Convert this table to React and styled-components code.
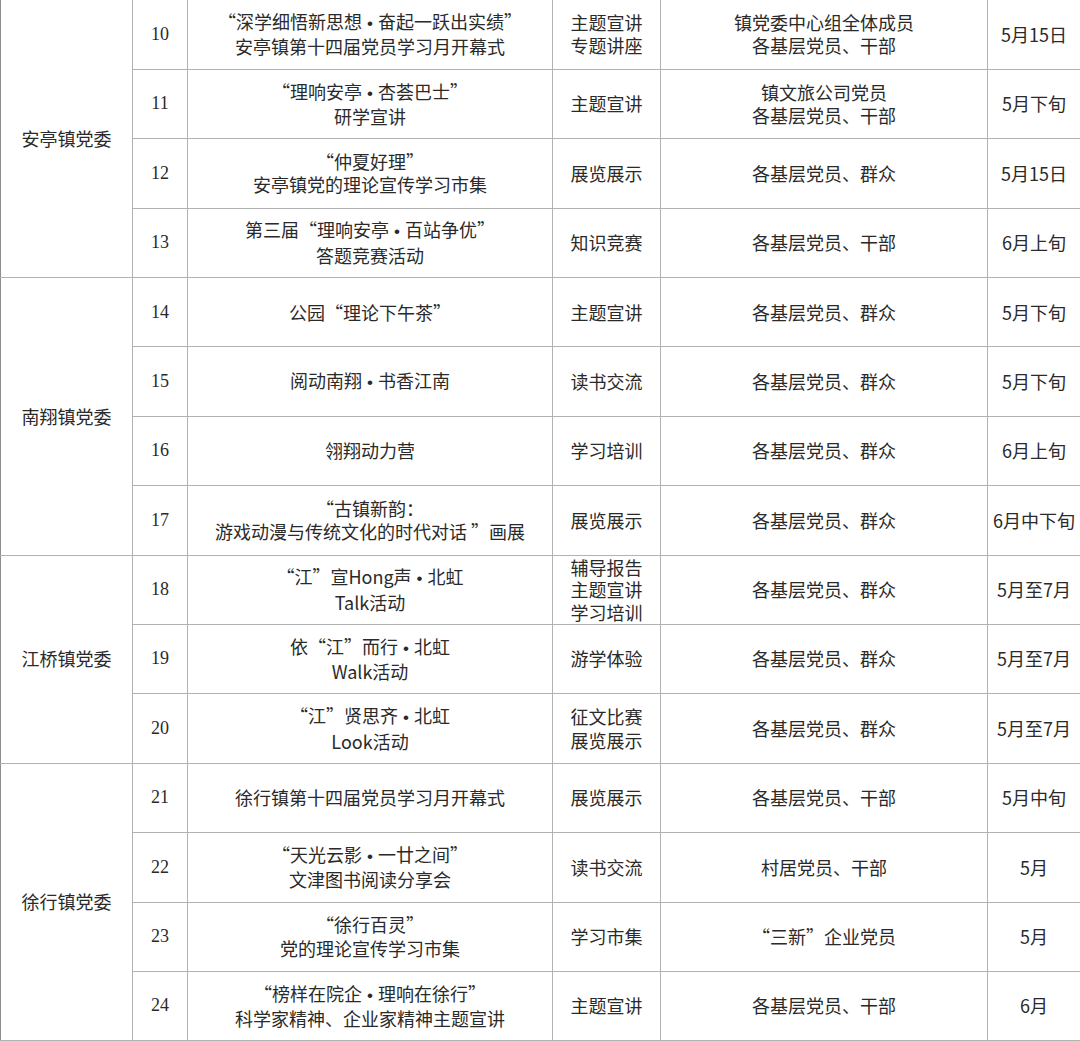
import React from 'react';
import styled, { createGlobalStyle } from 'styled-components';

const GlobalStyle = createGlobalStyle`
  html, body {
    margin: 0;
    padding: 0;
    background: #ffffff;
    overflow: hidden;
  }
`;

const cjk = '"Noto Sans CJK SC", "Noto Sans", sans-serif';

const Sheet = styled.div`
  width: 1080px;
  height: 1041px;
  overflow: hidden;
  background: #fff;
`;

const Table = styled.table`
  width: 1080px;
  border-collapse: collapse;
  table-layout: fixed;
  color: #2a2a2a;
  font-family: ${cjk};
  font-size: 18px;
  font-weight: 400;
`;

const Col = styled.col`
  width: ${(p) => p.$w}px;
`;

const Row = styled.tr`
  height: 69.4px;
`;

const Cell = styled.td`
  border: 1px solid #b2b2b2;
  border-top: ${(p) => (p.$top ? 'none' : '1px solid #b2b2b2')};
  padding: 0;
  text-align: center;
  vertical-align: middle;
  line-height: 23.5px;
  white-space: nowrap;
  overflow: hidden;
  font-family: ${(p) => (p.$num ? '"Liberation Serif", "Noto Sans CJK SC", serif' : cjk)};
  font-size: 18px;
  &:first-child {
    border-left-color: #8c8c8c;
  }
`;

const Line = styled.div`
  display: block;
  line-height: ${(p) => (p.$tight ? '22.8px' : '23.5px')};
`;

const Dot = styled.span`
  margin: 0 5px;
  font-family: "Liberation Sans", sans-serif;
  font-size: 17px;
`;

const groups = [
  {
    org: '安亭镇党委',
    rows: [
      ['10', ['“深学细悟新思想·奋起一跃出实绩”', '安亭镇第十四届党员学习月开幕式'], ['主题宣讲', '专题讲座'], ['镇党委中心组全体成员', '各基层党员、干部'], '5月15日'],
      ['11', ['“理响安亭·杏荟巴士”', '研学宣讲'], ['主题宣讲'], ['镇文旅公司党员', '各基层党员、干部'], '5月下旬'],
      ['12', ['“仲夏好理”', '安亭镇党的理论宣传学习市集'], ['展览展示'], ['各基层党员、群众'], '5月15日'],
      ['13', ['第三届“理响安亭·百站争优”', '答题竞赛活动'], ['知识竞赛'], ['各基层党员、干部'], '6月上旬'],
    ],
  },
  {
    org: '南翔镇党委',
    rows: [
      ['14', ['公园“理论下午茶”'], ['主题宣讲'], ['各基层党员、群众'], '5月下旬'],
      ['15', ['阅动南翔·书香江南'], ['读书交流'], ['各基层党员、群众'], '5月下旬'],
      ['16', ['翎翔动力营'], ['学习培训'], ['各基层党员、群众'], '6月上旬'],
      ['17', ['“古镇新韵：', '游戏动漫与传统文化的时代对话 ”画展'], ['展览展示'], ['各基层党员、群众'], '6月中下旬'],
    ],
  },
  {
    org: '江桥镇党委',
    rows: [
      ['18', ['“江”宣Hong声·北虹', 'Talk活动'], ['辅导报告', '主题宣讲', '学习培训'], ['各基层党员、群众'], '5月至7月'],
      ['19', ['依“江”而行·北虹', 'Walk活动'], ['游学体验'], ['各基层党员、群众'], '5月至7月'],
      ['20', ['“江”贤思齐·北虹', 'Look活动'], ['征文比赛', '展览展示'], ['各基层党员、群众'], '5月至7月'],
    ],
  },
  {
    org: '徐行镇党委',
    rows: [
      ['21', ['徐行镇第十四届党员学习月开幕式'], ['展览展示'], ['各基层党员、干部'], '5月中旬'],
      ['22', ['“天光云影·一廿之间”', '文津图书阅读分享会'], ['读书交流'], ['村居党员、干部'], '5月'],
      ['23', ['“徐行百灵”', '党的理论宣传学习市集'], ['学习市集'], ['“三新”企业党员'], '5月'],
      ['24', ['“榜样在院企·理响在徐行”', '科学家精神、企业家精神主题宣讲'], ['主题宣讲'], ['各基层党员、干部'], '6月'],
    ],
  },
];

const colWidths = [132, 55, 365, 108, 327, 93];

// split on the middle dot so it can be drawn as the heavier bullet of the original
const Text = ({ value }) => {
  const parts = value.split('·');
  return parts.map((p, i) => (
    <React.Fragment key={i}>
      {i > 0 && <Dot>•</Dot>}
      {p}
    </React.Fragment>
  ));
};

const Lines = ({ items }) =>
  items.map((t, i) => (
    <Line key={i} $tight={items.length > 2}>
      <Text value={t} />
    </Line>
  ));

export default function App() {
  return (
    <Sheet>
      <GlobalStyle />
      <Table>
        <colgroup>
          {colWidths.map((w, i) => (
            <Col key={i} $w={w} />
          ))}
        </colgroup>
        <tbody>
          {groups.map((g, gi) =>
            g.rows.map(([no, title, kind, who, date], i) => {
              const top = gi === 0 && i === 0;
              return (
                <Row key={no}>
                  {i === 0 && (
                    <Cell $top={top} rowSpan={g.rows.length}>
                      {g.org}
                    </Cell>
                  )}
                  <Cell $top={top} $num>{no}</Cell>
                  <Cell $top={top}><Lines items={title} /></Cell>
                  <Cell $top={top}><Lines items={kind} /></Cell>
                  <Cell $top={top}><Lines items={who} /></Cell>
                  <Cell $top={top}>{date}</Cell>
                </Row>
              );
            })
          )}
        </tbody>
      </Table>
    </Sheet>
  );
}
